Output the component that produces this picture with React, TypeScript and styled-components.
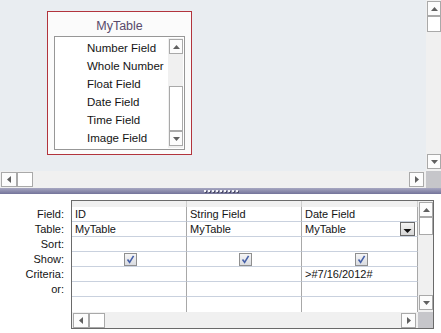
import React from 'react';
import styled, { createGlobalStyle } from 'styled-components';

type Dir = 'up' | 'down' | 'left' | 'right';

const GlobalStyle = createGlobalStyle`
  html, body {
    margin: 0;
    padding: 0;
    background: #ffffff;
  }
  body {
    font-family: 'Segoe UI', 'Liberation Sans', Arial, sans-serif;
    color: #1b1b1b;
  }
`;

const fields = ['Number Field', 'Whole Number', 'Float Field', 'Date Field', 'Time Field', 'Image Field'];
const rowLabels = ['Field:', 'Table:', 'Sort:', 'Show:', 'Criteria:', 'or:'];

interface GridColumn {
  field: string;
  table: string;
  criteria?: string;
  dropdown?: boolean;
}

const columns: GridColumn[] = [
  { field: 'ID', table: 'MyTable' },
  { field: 'String Field', table: 'MyTable' },
  { field: 'Date Field', table: 'MyTable', criteria: '>#7/16/2012#', dropdown: true },
];

const Arrow = ({ dir, color = '#606060' }: { dir: Dir; color?: string }) => {
  const vertical = dir === 'up' || dir === 'down';
  const points = {
    up: '0,4 3.5,0 7,4',
    down: '0,0 7,0 3.5,4',
    left: '4,0 4,7 0,3.5',
    right: '0,0 0,7 4,3.5',
  }[dir];
  return (
    <svg width={vertical ? 7 : 4} height={vertical ? 4 : 7} viewBox={vertical ? '0 0 7 4' : '0 0 4 7'}>
      <polygon points={points} fill={color} />
    </svg>
  );
};

const CheckBox = () => (
  <CheckFrame>
    <svg width="11" height="11" viewBox="0 0 11 11">
      <path d="M2.5 5.5 L4.6 8.3 L8.6 1.8" fill="none" stroke="#4660a8" strokeWidth="1.6" />
    </svg>
  </CheckFrame>
);

// thumbTop = gap between the up button and the thumb
const VScroll = ({ thumbTop, thumbHeight }: { thumbTop: number; thumbHeight: number }) => (
  <VBar>
    <ScrollBtn $w={14} $h={15}><Arrow dir="up" /></ScrollBtn>
    <TrackGap style={{ height: thumbTop }} />
    <Thumb $w={14} $h={thumbHeight} />
    <Spacer />
    <ScrollBtn $w={14} $h={15}><Arrow dir="down" /></ScrollBtn>
  </VBar>
);

const HScroll = ({ height }: { height: number }) => (
  <HBar $h={height}>
    <ScrollBtn $w={16} $h={15}><Arrow dir="left" /></ScrollBtn>
    <Thumb $w={16} $h={15} />
    <Spacer />
    <ScrollBtn $w={15} $h={15}><Arrow dir="right" /></ScrollBtn>
  </HBar>
);

const App = () => {
  return (
    <>
      <GlobalStyle />
      <Window>
        <TopPane>
          <Canvas>
            <TableCard>
              <CardTitle>MyTable</CardTitle>
              <ListBox>
                <FieldList>
                  {fields.map((f) => (
                    <FieldItem key={f}>{f}</FieldItem>
                  ))}
                </FieldList>
                <VScroll thumbTop={32} thumbHeight={45} />
              </ListBox>
            </TableCard>
          </Canvas>
          <VScroll thumbTop={0} thumbHeight={16} />
        </TopPane>
        <TopScrollRow>
          <HScroll height={17} />
          <Corner />
        </TopScrollRow>
        <Splitter>
          <Grip>
            {Array.from({ length: 9 }).map((_, i) => (
              <GripDot key={i} />
            ))}
          </Grip>
        </Splitter>
        <BottomPane>
          <LabelColumn>
            {rowLabels.map((l) => (
              <RowLabel key={l}>{l}</RowLabel>
            ))}
          </LabelColumn>
          <GridBox>
            <Cells>
              {columns.map((c, i) => (
                <HeaderCell key={'h' + i} />
              ))}
              {columns.map((c, i) => (
                <Cell key={'f' + i}>{c.field}</Cell>
              ))}
              {columns.map((c, i) => (
                <Cell key={'t' + i}>
                  {c.table}
                  {c.dropdown && (
                    <DropButton>
                      <svg width="9" height="6" viewBox="0 0 9 6">
                        <polygon points="0.5,1 8.5,1 4.5,5" fill="#111" />
                      </svg>
                    </DropButton>
                  )}
                </Cell>
              ))}
              {columns.map((c, i) => (
                <Cell key={'s' + i} />
              ))}
              {columns.map((c, i) => (
                <Cell key={'c' + i} $center>
                  <CheckBox />
                </Cell>
              ))}
              {columns.map((c, i) => (
                <Cell key={'r' + i}>{c.criteria}</Cell>
              ))}
              {columns.map((c, i) => (
                <Cell key={'o' + i} />
              ))}
              {columns.map((c, i) => (
                <Cell key={'b' + i} $last />
              ))}
            </Cells>
            <VScroll thumbTop={0} thumbHeight={18} />
            <HScroll height={16} />
            <Corner />
          </GridBox>
        </BottomPane>
      </Window>
    </>
  );
};

const Window = styled.div`
  width: 441px;
  height: 333px;
  display: flex;
  flex-direction: column;
  overflow: hidden;
`;

const TopPane = styled.div`
  height: 171px;
  display: flex;
`;

const Canvas = styled.div`
  flex: 1;
  position: relative;
  background: #e9edf1;
`;

const TableCard = styled.div`
  position: absolute;
  left: 47px;
  top: 11px;
  width: 145px;
  height: 144px;
  box-sizing: border-box;
  border: 1px solid #b2343d;
  background: #fbfbfb;
  display: flex;
  flex-direction: column;
  padding: 4px 6px 6px;
`;

const CardTitle = styled.div`
  height: 20px;
  line-height: 20px;
  text-align: center;
  font-size: 12.5px;
  color: #584a6c;
`;

const ListBox = styled.div`
  flex: 1;
  display: flex;
  border: 1px solid #979797;
  background: #ffffff;
  padding: 1px 1px 1px 0;
`;

const FieldList = styled.div`
  flex: 1;
  padding: 1px 0 0 32px;
  overflow: hidden;
`;

const FieldItem = styled.div`
  height: 18px;
  line-height: 18px;
  font-size: 11.5px;
  white-space: nowrap;
  color: #141414;
`;

const VBar = styled.div`
  width: 15px;
  display: flex;
  flex-direction: column;
  align-items: flex-end;
  background: #f0f0f0;
  padding: 1px 0 2px;
  box-sizing: border-box;
`;

const HBar = styled.div<{ $h: number }>`
  flex: 1;
  height: ${({ $h }) => $h}px;
  display: flex;
  align-items: center;
  background: #f0f0f0;
  padding: 0 2px 0 1px;
`;

const ScrollBtn = styled.div<{ $w: number; $h: number }>`
  width: ${({ $w }) => $w}px;
  height: ${({ $h }) => $h}px;
  box-sizing: border-box;
  border: 1px solid #a9a9a9;
  background: #fcfcfc;
  display: flex;
  align-items: center;
  justify-content: center;
  flex-shrink: 0;
`;

const Thumb = styled.div<{ $w: number; $h: number }>`
  width: ${({ $w }) => $w}px;
  height: ${({ $h }) => $h}px;
  box-sizing: border-box;
  border: 1px solid #a9a9a9;
  background: #ffffff;
  flex-shrink: 0;
`;

const TrackGap = styled.div`
  flex-shrink: 0;
`;

const Spacer = styled.div`
  flex: 1;
`;

const TopScrollRow = styled.div`
  height: 17px;
  display: flex;
`;

const Corner = styled.div`
  width: 15px;
  background: #c6c6ca;
`;

const Splitter = styled.div`
  height: 6px;
  background: linear-gradient(#a7a7c1, #74749a);
  display: flex;
  justify-content: center;
  align-items: center;
`;

const Grip = styled.div`
  display: flex;
  gap: 2px;
`;

const GripDot = styled.span`
  width: 2px;
  height: 2px;
  background: #f4f4f8;
  box-shadow: 1px 1px 0 #4b4b66;
`;

const BottomPane = styled.div`
  flex: 1;
  display: flex;
  padding-top: 6px;
  background: #ffffff;
`;

const LabelColumn = styled.div`
  width: 71px;
  padding: 7px 7px 0 0;
  box-sizing: border-box;
`;

const RowLabel = styled.div`
  height: 15px;
  line-height: 15px;
  text-align: right;
  font-size: 11px;
  color: #141414;
`;

const GridBox = styled.div`
  width: 363px;
  height: 129px;
  box-sizing: border-box;
  border: 1px solid #6a6a6a;
  display: grid;
  grid-template-columns: 346px 15px;
  grid-template-rows: 111px 16px;
`;

const Cells = styled.div`
  display: grid;
  grid-template-columns: 115px 115px 116px;
  grid-template-rows: 6px repeat(7, 15px);
  background: #ffffff;
`;

const HeaderCell = styled.div`
  background: #f0f0f0;
  border-right: 1px solid #cfcfcf;
`;

const Cell = styled.div<{ $center?: boolean; $last?: boolean }>`
  position: relative;
  box-sizing: border-box;
  border-right: 1px solid #a8a8a8;
  border-bottom: ${({ $last }) => ($last ? 'none' : '1px solid #c9d1de')};
  font-size: 11px;
  line-height: 14px;
  padding-left: 3px;
  white-space: nowrap;
  color: #141414;
  display: flex;
  align-items: center;
  justify-content: ${({ $center }) => ($center ? 'center' : 'flex-start')};
`;

const CheckFrame = styled.div`
  width: 13px;
  height: 13px;
  box-sizing: border-box;
  border: 1px solid #8f8f8f;
  background: linear-gradient(#f6f6f6, #d9dbe0);
  display: flex;
  align-items: center;
  justify-content: center;
`;

const DropButton = styled.div`
  position: absolute;
  right: 2px;
  top: 0;
  width: 15px;
  height: 14px;
  box-sizing: border-box;
  border: 1px solid #6a6a6a;
  background: linear-gradient(#f4f4f4, #d6d6d6);
  display: flex;
  align-items: flex-end;
  justify-content: center;
  padding-bottom: 1px;
`;

export default App;
